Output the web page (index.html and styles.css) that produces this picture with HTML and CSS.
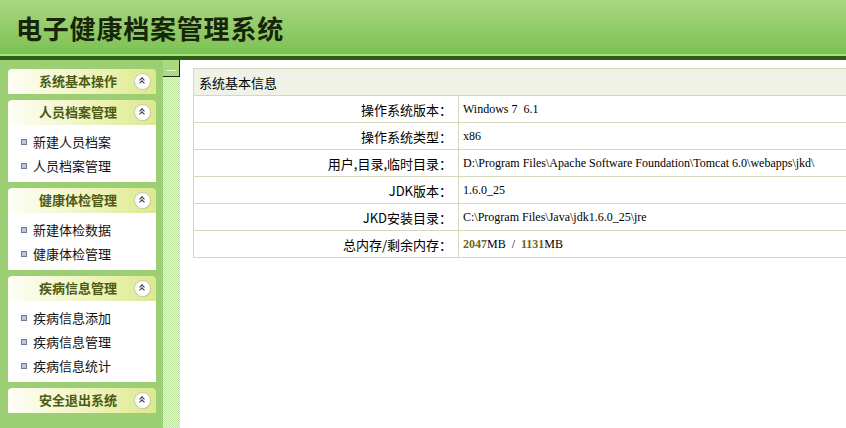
FILE: index.html
```html
<!DOCTYPE html>
<html lang="zh-CN">
<head>
    <meta charset="UTF-8">
    <title>电子健康档案管理系统</title>
    <link rel="stylesheet" href="styles.css">
</head>
<body>
    <div class="top">
        <h1 class="title">电子健康档案管理系统</h1>
    </div>
    <div class="top-line"></div>
    <div class="top-bar"></div>

    <div class="main">
        <div class="side">
            <div class="menu">
                <div class="menu-head">系统基本操作<span class="fold"></span></div>
            </div>
            <div class="menu">
                <div class="menu-head">人员档案管理<span class="fold"></span></div>
                <ul class="menu-list">
                    <li>新建人员档案</li>
                    <li>人员档案管理</li>
                </ul>
            </div>
            <div class="menu">
                <div class="menu-head">健康体检管理<span class="fold"></span></div>
                <ul class="menu-list">
                    <li>新建体检数据</li>
                    <li>健康体检管理</li>
                </ul>
            </div>
            <div class="menu">
                <div class="menu-head">疾病信息管理<span class="fold"></span></div>
                <ul class="menu-list">
                    <li>疾病信息添加</li>
                    <li>疾病信息管理</li>
                    <li>疾病信息统计</li>
                </ul>
            </div>
            <div class="menu">
                <div class="menu-head">安全退出系统<span class="fold"></span></div>
            </div>
        </div>

        <div class="split">
            <div class="split-btn"><span></span></div>
        </div>

        <div class="content">
            <table class="info">
                <tr>
                    <th colspan="2">系统基本信息</th>
                </tr>
                <tr>
                    <td class="label">操作系统版本：</td>
                    <td class="value">Windows 7&nbsp; 6.1</td>
                </tr>
                <tr>
                    <td class="label">操作系统类型：</td>
                    <td class="value">x86</td>
                </tr>
                <tr>
                    <td class="label">用户,目录,临时目录：</td>
                    <td class="value">D:\Program Files\Apache Software Foundation\Tomcat 6.0\webapps\jkd\</td>
                </tr>
                <tr>
                    <td class="label">JDK版本：</td>
                    <td class="value">1.6.0_25</td>
                </tr>
                <tr>
                    <td class="label">JKD安装目录：</td>
                    <td class="value">C:\Program Files\Java\jdk1.6.0_25\jre</td>
                </tr>
                <tr>
                    <td class="label">总内存/剩余内存：</td>
                    <td class="value"><b>2047</b>MB&nbsp; /&nbsp; <b>1131</b>MB</td>
                </tr>
            </table>
        </div>
    </div>
</body>
</html>
```

FILE: styles.css
```css
body, h1, ul, li {
    margin: 0;
    padding: 0;
    list-style: none;
}
body {
    overflow: hidden;
    font-family: "Noto Sans CJK SC", "Liberation Sans", sans-serif;
    font-size: 13px;
    color: #000;
    background: #fff;
}

/* 顶部标题 */
.top {
    height: 54px;
    background: linear-gradient(to bottom, #abd682, #7bc252);
}
.title {
    padding-left: 16px;
    line-height: 56px;
    font-size: 26px;
    font-weight: bold;
    letter-spacing: 0.8px;
    color: #17260a;
}
.top-line {
    height: 2px;
    background: #a4e27a;
}
.top-bar {
    height: 4px;
    background: #2d5e15;
}

.main {
    display: flex;
    height: 368px;
}

/* 左侧菜单 */
.side {
    width: 148px;
    padding: 9px 7px 0 8px;
    background: #9ccf74;
}
.menu {
    margin-bottom: 6px;
}
.menu-head {
    position: relative;
    height: 25px;
    padding-right: 8px;
    line-height: 23px;
    text-align: center;
    font-weight: bold;
    color: #4d5a14;
    border-radius: 4px 4px 0 0;
    background: linear-gradient(to right, #fdfef6, #f2f6c8 45%, #dde98c);
}
.fold {
    position: absolute;
    right: 6px;
    top: 5px;
    width: 15px;
    height: 15px;
    border-radius: 50%;
    background: #fff;
    box-shadow: 0 0 0 1px #c9cfb6, 1px 1px 1px rgba(0,0,0,.15);
}
.fold::before,
.fold::after {
    content: "";
    position: absolute;
    left: 5px;
    width: 3px;
    height: 3px;
    border-left: 1px solid #333;
    border-top: 1px solid #333;
    transform: rotate(45deg);
}
.fold::before {
    top: 4px;
}
.fold::after {
    top: 7px;
}
.menu-list {
    padding: 5px 0 4px;
    background: #fff;
}
.menu-list li {
    height: 24px;
    line-height: 23px;
    padding-left: 25px;
    position: relative;
    color: #111;
}
.menu-list li::before {
    content: "";
    position: absolute;
    left: 13px;
    top: 9px;
    width: 4px;
    height: 4px;
    border: 1px solid #6d7a96;
    background: #bac6dc;
}

/* 分隔条 */
.split {
    width: 17px;
    background: repeating-conic-gradient(#bde39e 0 25%, #eaf7de 0 50%) 0 0 / 2px 2px;
}
.split-btn {
    position: relative;
    width: 16px;
    height: 16px;
    border-right: 1px solid #1d2a12;
    border-bottom: 1px solid #1d2a12;
    background: #a9da82;
}
.split-btn span {
    position: absolute;
    left: 3px;
    top: 10px;
    width: 10px;
    height: 1px;
    background: #e4f5d4;
}

/* 右侧信息表 */
.content {
    flex: 1;
    padding: 8px 0 0 13px;
    overflow: hidden;
}
.info {
    width: 720px;
    border-collapse: collapse;
}
.info th,
.info td {
    height: 26px;
    padding: 0;
    border: 1px solid #d5d8bd;
    font-weight: normal;
}
.info th {
    padding-left: 5px;
    text-align: left;
    background: #f0f2e8;
}
.info .label {
    width: 258px;
    padding-right: 6px;
    text-align: right;
}
.info .value {
    padding-left: 4px;
    font-family: "Liberation Serif", serif;
    font-size: 12px;
}
.info .value b {
    color: #746414;
}
```
